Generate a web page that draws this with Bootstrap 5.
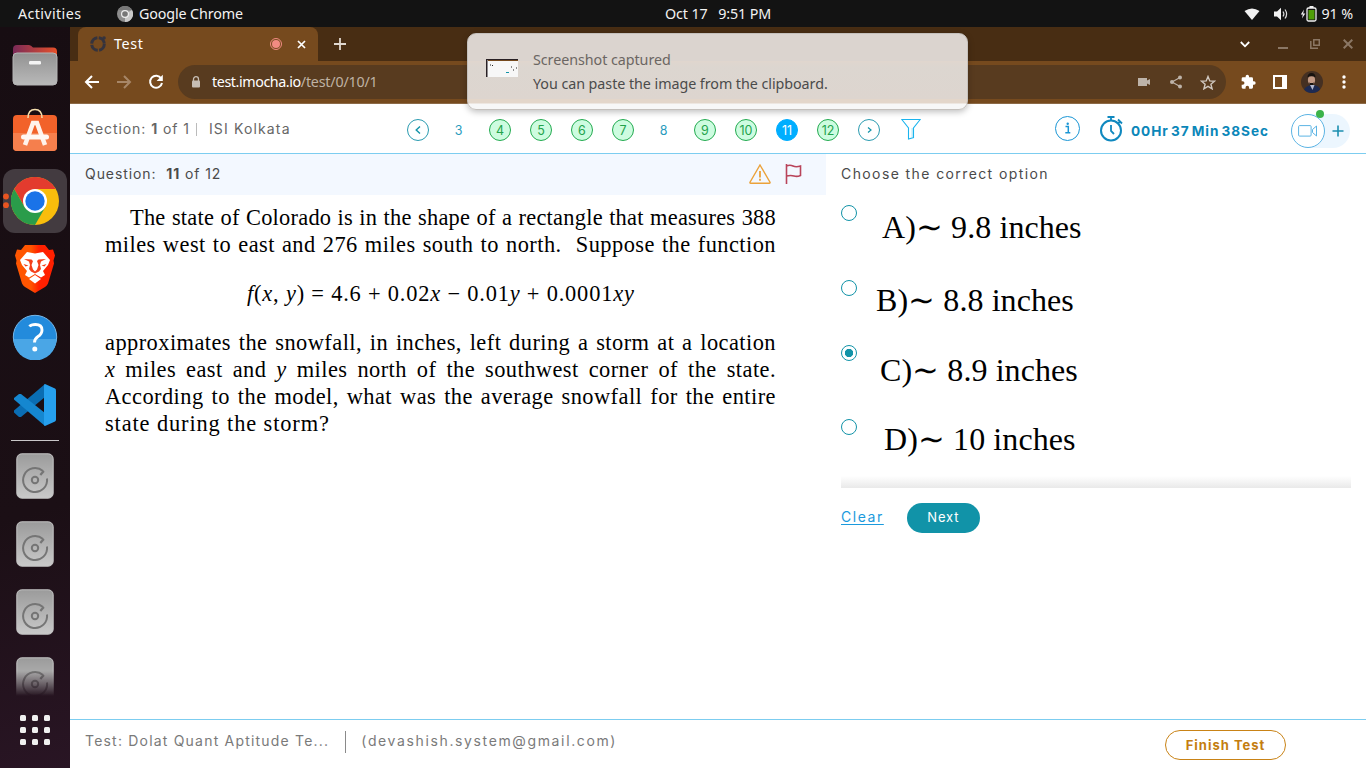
<!DOCTYPE html>
<html lang="en">
<head>
<meta charset="utf-8">
<meta name="viewport" content="width=device-width, initial-scale=1">
<title>Test</title>
<link href="https://cdn.jsdelivr.net/npm/bootstrap@5.3.0/dist/css/bootstrap.min.css" rel="stylesheet">
<style>
body{font-family:Inter,"Liberation Sans",sans-serif;color:#4a4a4a;background:#fff;font-size:14px;line-height:20px}
.desktop{width:1366px;height:768px}
.sys{font-family:"Noto Sans","Open Sans",sans-serif}
svg{display:block;flex:none}
.t{white-space:pre;display:inline-block}
.topbar{height:27px;background:#131313;color:#f2f2f2;font-size:14.3px;line-height:27px;letter-spacing:-.13px}
.topbar .left-side{width:665px;padding-left:18px}
.topbar .menu-item{letter-spacing:.38px;width:63px}
.dock{width:70px;padding-top:4px;background:linear-gradient(165deg,#170d12 0%,#1b0f15 65%,#291524 100%)}
.slot{height:68px;flex:none}
.slot-last{height:50px;flex:none;-webkit-mask-image:linear-gradient(#000 50%,transparent 100%);mask-image:linear-gradient(#000 50%,transparent 100%)}
.active-app{width:64px;height:64px;border-radius:12px;background:#433b40}
.tabstrip{height:34px;background:#482d13;padding-left:8px}
.tab-open{width:240px;height:34px;background:#764a1e;border-radius:8px 8px 0 0;color:#fff;font-size:14.3px;padding-left:12px}
.tab-open .t{letter-spacing:.6px}
.toolbar{height:42px;background:#764a1e;padding-left:14px}
.omni{height:34px;width:1048px;border-radius:17px;background:#583b1f;color:#fff;font-size:14.3px;margin-left:14px;padding-left:13px;padding-right:10px;letter-spacing:-.42px}
.omni .path{color:#bfb2a3;letter-spacing:-.2px}
.seam{height:1px;background:#8c6a47}
.avatar{width:22px;height:22px;border-radius:50%;overflow:hidden}
.test-head{height:50px;border-bottom:1px solid #7ccdf0;padding-left:15px}
.section-info{width:322px;color:#666;padding-top:1px;letter-spacing:.93px}
.section-info .client{letter-spacing:1.15px}
.pager{gap:19px}
.pg{width:22px;height:22px;border-radius:50%;font-size:12.5px;line-height:21px;text-align:center;border:1px solid transparent;color:#2a9bbd;flex:none}
.pg.plain{text-indent:-1px}
.pg.done{background:#cdfce0;border-color:#23ab50;color:#23a34c}
.pg.now{background:#00aeff;border-color:#00aeff;color:#fff}
.pg.arrow{border-color:#2a9bb0;display:flex;align-items:center;justify-content:center}
.timer{color:#0b87b9;font-weight:700;font-size:13.6px;letter-spacing:.95px;word-spacing:-2px;width:160px;padding-top:4px}
.cam-pill{width:59px;height:34px;border-radius:17px;background:linear-gradient(90deg,transparent 17px,#ecf6fe 17px)}
.cam-ring{width:34px;height:34px;border:1px solid #5cb4e4;border-radius:50%;background:#fff}
.live-dot{width:8px;height:8px;border-radius:50%;background:#3cb34a;left:25px;top:-4px}
.q-pane{width:756px}
.q-head{height:41px;background:#f3f8ff;padding:0 24px 2px 15px;letter-spacing:.92px}
.q-body{font-family:"Liberation Serif",serif;color:#000;font-size:22.4px;line-height:27px;width:671px;margin:9px 0 0 35px;letter-spacing:.45px}
.ln{display:block;white-space:nowrap;text-align-last:justify;height:27px}
.ln.first{padding-left:25px;letter-spacing:.25px}
.ln.end{text-align-last:left;letter-spacing:.88px}
.formula{margin:22px 0 22px 142px;height:27px;letter-spacing:.81px}
.a-pane{width:540px;padding-left:15px}
.a-head{height:41px;padding-bottom:2px;letter-spacing:1.4px}
.answers{height:293px;width:510px;padding-top:10px;background:linear-gradient(transparent 281px,#e9e9e9 293px)}
.opt{font-family:"Liberation Serif",serif;font-size:32px;line-height:36px;color:#000;letter-spacing:.08px}
.dotbox{width:16px;height:16px;border:1px solid #1293a8;border-radius:50%;flex:none}
.dotbox.on{background:radial-gradient(circle,#1293a8 3.8px,#fff 4.5px)}
.opt-a{height:75px}.opt-b{height:65px}.opt-c{height:74px}.opt-d{height:60px}
.opt-a .t{margin:4px 0 0 25px}.opt-b .t{margin:2px 0 0 19px}.opt-c .t{margin:7px 0 0 23px}.opt-d .t{margin:2px 0 0 27px}
.actions{padding-top:15px;gap:23px}
.clear-link{color:#1b9add;text-decoration:underline;text-underline-offset:2px;letter-spacing:1.55px;margin-top:-2px}
.btn-next{width:73px;height:30px;background:#1193a8;color:#fff;border-radius:15px;font-size:13px;letter-spacing:.8px}
.btn-next:hover{background:#0e8093;color:#fff}
.test-foot{height:49px;border-top:1px solid #7ccdf0;padding:0 80px 0 15px;color:#7a7a7a;letter-spacing:1.2px}
.test-foot .t{margin-bottom:7px}
.foot-bar{margin-bottom:5px}
.test-foot .mail{letter-spacing:1.63px}
.btn-finish{width:121px;height:30px;border:1px solid #c98316;border-radius:15px;color:#c47d10;font-weight:700;font-size:13px;letter-spacing:1px;margin-top:2px;padding:2px 0 0}
.foot-bar{width:1px;height:22px;background:#8a8a8a;margin-left:16px;margin-right:15px}
.toast-note{left:467px;top:33px;width:501px;height:77px;border-radius:9px;border:1px solid #c4c0bc;background:linear-gradient(#dbd4cf 27px,#e0d6ce 27px,#dcd6d0 33px,#ddd5cf 65px,#e3d6ca 65px,#e3d6ca 69px,#f7f7f7 70px);box-shadow:0 2px 6px rgba(0,0,0,.25);color:#4b4b4b;font-size:14.3px;line-height:24px;padding-left:18px;letter-spacing:-.05px}
</style>
</head>
<body>
<svg width="0" height="0" class="position-absolute">
  <defs>
    <linearGradient id="gDisk" x1="0" y1="0" x2="0" y2="1"><stop offset="0" stop-color="#9b9b9b"/><stop offset="1" stop-color="#c9c9c9"/></linearGradient>
    <symbol id="disk" viewBox="0 0 38 46"><rect x=".8" y=".8" width="36.4" height="44.4" rx="5" fill="url(#gDisk)" stroke="#c4c4c4"/><path d="M27 18A12 12 0 1 0 31 25.500" fill="none" stroke="#757575" stroke-width="2"/><path d="M27.800 18l-3.500 4" stroke="#757575" stroke-width="2.200"/><circle cx="19" cy="27" r="3.200" fill="none" stroke="#757575" stroke-width="2"/></symbol>
  </defs>
</svg>
<div class="desktop d-flex flex-column position-relative overflow-hidden">
  <header class="topbar sys d-flex">
    <div class="left-side d-flex align-items-center">
      <span class="t menu-item">Activities</span>
      <svg width="16" height="16" viewBox="0 0 16 16" style="margin:0 6px 0 36px"><circle cx="8" cy="8" r="8" fill="#8d8d8d"/><path d="M8 8L15 4A8 8 0 0 1 8 16z" fill="#c9c9c9"/><path d="M1 4A8 8 0 0 1 15 4H8z" fill="#777"/><circle cx="8" cy="8" r="4" fill="#eee"/><circle cx="8" cy="8" r="2.800" fill="#777"/></svg>
      <span class="t">Google Chrome</span>
    </div>
    <span class="t">Oct 17   9:51 PM</span>
    <div class="d-flex align-items-center ms-auto" style="padding-right:13px">
      <svg width="16" height="12" viewBox="0 0 16 12"><path d="M.5 3Q8-2 15.500 3L8 12z" fill="#f2f2f2"/></svg>
      <svg width="16" height="14" viewBox="0 0 16 14" style="margin-left:13px"><path d="M1 4.500h3L8 .8v12.400L4 9.500H1z" fill="#f2f2f2"/><path d="M10 4.500q1.800 2.500 0 5M12 2.500q3.200 4.500 0 9" fill="none" stroke="#ddd" stroke-width="1.200"/></svg>
      <svg width="17" height="16" viewBox="0 0 17 16" style="margin:0 5px 0 11px"><path d="M4 3.500L.8 8.500h2L2 12.500l3.300-5H3.200z" fill="#f2f2f2"/><rect x="7" y="2" width="9" height="13" rx="1.500" fill="#131313" stroke="#f2f2f2" stroke-width="1.300"/><rect x="9.500" y="0" width="4" height="2" fill="#f2f2f2"/><rect x="8.500" y="4" width="6" height="9.500" fill="#4f9e07"/></svg>
      <span class="t">91 %</span>
    </div>
  </header>

  <div class="d-flex flex-grow-1">
    <nav class="dock d-flex flex-column align-items-center position-relative">
      <div class="slot d-flex align-items-center">
        <svg width="46" height="42" viewBox="0 0 46 42"><defs><linearGradient id="gf" x2="1"><stop offset="0" stop-color="#7a2a58"/><stop offset="1" stop-color="#e6502a"/></linearGradient><linearGradient id="gg" x2="0" y2="1"><stop offset="0" stop-color="#929292"/><stop offset="1" stop-color="#b9b9b9"/></linearGradient></defs><path d="M1 18V5q0-4 4-4h12q2 0 4 2.500h20q4 0 4 4V18z" fill="url(#gf)"/><rect x="1" y="9" width="44" height="32" rx="4" fill="url(#gg)" stroke="#b5b5b5"/><rect x="17" y="17" width="12" height="3.500" rx="1.200" fill="#f4f4f4"/></svg>
      </div>
      <div class="slot d-flex align-items-center">
        <svg width="46" height="44" viewBox="0 0 46 44" style="margin-top:-6px"><rect x="1" y="7" width="44" height="36" rx="4" fill="#f2622a"/><path d="M1 25h44v14q0 4-4 4H5q-4 0-4-4z" fill="#f57f4d"/><path d="M16 10q0-8.500 7-8.500T30 10" fill="none" stroke="#f6dfae" stroke-width="1.500"/><path d="M13 37l8-22h4l8 22" fill="none" stroke="#fff3ec" stroke-width="4.500"/><rect x="9" y="26.500" width="28" height="5" rx="2.500" fill="#fff8f4"/></svg>
      </div>
      <div class="slot d-flex align-items-center">
        <div class="active-app d-flex align-items-center justify-content-center">
          <svg width="48" height="48" viewBox="0 0 48 48"><circle cx="24" cy="24" r="24" fill="#f9bd0c"/><path d="M3.200 12A24 24 0 0 1 44.800 12H24L13.600 30z" fill="#e33b2e"/><path d="M3.200 12A24 24 0 0 0 24 48L34.400 30H24L13.600 30z" fill="#2a9c4a"/><circle cx="24" cy="24" r="12" fill="#fff"/><circle cx="24" cy="24" r="9.700" fill="#1a73e8"/></svg>
        </div>
      </div>
      <svg class="position-absolute" width="6" height="16" viewBox="0 0 6 16" style="left:3px;top:166px"><circle cx="3" cy="3.500" r="2.900" fill="#e95420"/><circle cx="3" cy="12.200" r="2.900" fill="#e95420"/></svg>
      <div class="slot d-flex align-items-center">
        <svg width="42" height="48" viewBox="0 0 42 48"><defs><linearGradient id="gb" x2="1"><stop offset=".4" stop-color="#ff5500"/><stop offset=".6" stop-color="#ff2000"/></linearGradient></defs><path d="M11 0h20l4 5 4-.5 2 6-1.500 5 .5 3-6 20q-1 2-3 3.500L21 48 11 42q-2-1.500-3-3.500L2 18.500l.5-3L1 10.500l2-6L7 5z" fill="url(#gb)"/><path d="M13 7l8 1.500L29 7l7 8-2 5-5 6 2 4-4 2.500-6-3.500-6 3.500-4-2.500 2-4-5-6-2-5z" fill="#fff"/><path d="M10 14l7.500.5 1.500 1.500-1.500 4 1.500 4.500 2 2 2-2 1.500-4.500-1.500-4 1.500-1.500L32 14l-5 2.500-1 3.500 1 4-2 2.500-4 2-4-2-2-2.500 1-4-1-3.500z" fill="#f4401a"/><path d="M9.500 19l5 1.500-3 1zM32.500 19l-5 1.500 3 1z" fill="#f4401a"/><path d="M15 34l6-4 6 4-6 4.500z" fill="#fff"/></svg>
      </div>
      <div class="slot d-flex align-items-center">
        <svg width="46" height="46" viewBox="0 0 46 46"><circle cx="23" cy="23" r="21.700" fill="#238bdc" stroke="#77b8ea"/><path d="M1.500 25a21.500 21.500 0 0 0 43 0z" fill="#4aa6e6"/><path d="M17.500 12.500q1.500-2 6-2 6.500 0 6.500 5.500 0 4-4 6.500-3.500 2.300-3.500 6" fill="none" stroke="#fff" stroke-width="2.900"/><circle cx="22.800" cy="35" r="2.500" fill="#fff"/></svg>
      </div>
      <div class="slot d-flex align-items-center">
        <svg width="42" height="42" viewBox="0 0 42 42"><path d="M31 0v13L7 33l-2 0L0 28.500v-2z" fill="#0a6db3"/><path d="M0 14L5 10h2L31 29v13L0 15.500z" fill="#1587d0"/><path d="M31 0l10 4.500q1 .5 1 2v29q0 1.500-1 2L31 42q-1 0-1-2V2q0-2 1-2z" fill="#26a0ee"/></svg>
      </div>
      <div style="width:48px;height:1px;margin:1px 0;background:#c9c6c8;flex:none"></div>
      <div class="slot d-flex align-items-center"><svg width="38" height="46"><use href="#disk"/></svg></div>
      <div class="slot d-flex align-items-center"><svg width="38" height="46"><use href="#disk"/></svg></div>
      <div class="slot d-flex align-items-center"><svg width="38" height="46"><use href="#disk"/></svg></div>
      <div class="slot-last overflow-hidden"><svg width="38" height="46" style="margin-top:11px"><use href="#disk"/></svg></div>
      <svg width="30" height="30" viewBox="0 0 30 30" fill="#f0f0f0" style="margin-top:19px"><rect width="6" height="6" rx="1.500"/><rect x="12" width="6" height="6" rx="1.500"/><rect x="24" width="6" height="6" rx="1.500"/><rect y="12" width="6" height="6" rx="1.500"/><rect x="12" y="12" width="6" height="6" rx="1.500"/><rect x="24" y="12" width="6" height="6" rx="1.500"/><rect y="24" width="6" height="6" rx="1.500"/><rect x="12" y="24" width="6" height="6" rx="1.500"/><rect x="24" y="24" width="6" height="6" rx="1.500"/></svg>
    </nav>

    <section class="d-flex flex-column flex-grow-1">
      <div class="tabstrip sys d-flex align-items-center">
        <div class="tab-open d-flex align-items-center">
          <svg width="16" height="16" viewBox="0 0 16 16"><circle cx="8" cy="8" r="6.300" fill="none" stroke="#35333d" stroke-width="3" stroke-dasharray="8.500 1.400"/><circle cx="14" cy="2" r="1.800" fill="#35333d"/></svg>
          <span class="t" style="margin-left:8px">Test</span>
          <svg width="14" height="14" viewBox="0 0 14 14" style="margin-left:auto;margin-right:14px"><circle cx="7" cy="7" r="5.500" fill="none" stroke="#f28b82"/><circle cx="7" cy="7" r="4" fill="#f28b82"/></svg>
          <svg width="9" height="9" viewBox="0 0 9 9" style="margin-right:12px"><path d="M1 1l7 7M8 1l-7 7" stroke="#fff" stroke-width="1.700"/></svg>
        </div>
        <svg width="12" height="12" viewBox="0 0 12 12" style="margin-left:16px"><path d="M6 0v12M0 6h12" stroke="#e0d8d0" stroke-width="1.800"/></svg>
        <div class="d-flex align-items-center ms-auto" style="padding-right:13px">
          <svg width="10" height="7" viewBox="0 0 10 7" style="margin-right:28px"><path d="M.8 1L5 5.300 9.200 1" fill="none" stroke="#fff" stroke-width="1.800"/></svg>
          <svg width="10" height="10" viewBox="0 0 10 10" style="margin-right:22px"><path d="M0 9h10" stroke="#8b7765" stroke-width="2"/></svg>
          <svg width="10" height="10" viewBox="0 0 10 10" style="margin-right:23px"><path d="M3.800.8h5.500v5.500H3.800zM.8 2v7.300H8" fill="none" stroke="#8b7765" stroke-width="1.500"/></svg>
          <svg width="10" height="10" viewBox="0 0 10 10"><path d="M.7.700l8.600 8.600M9.300.7L.7 9.300" stroke="#8b7765" stroke-width="2"/></svg>
        </div>
      </div>
      <div class="toolbar sys d-flex align-items-center">
        <svg width="16" height="14" viewBox="0 0 16 14"><path d="M15 7H2M8 1L2 7l6 6" fill="none" stroke="#fff" stroke-width="2"/></svg>
        <svg width="16" height="14" viewBox="0 0 16 14" style="margin-left:16px"><path d="M1 7h13M8 1l6 6-6 6" fill="none" stroke="#a78667" stroke-width="2"/></svg>
        <svg width="16" height="16" viewBox="0 0 16 16" style="margin-left:16px"><path d="M13.200 4.500A6 6 0 1 0 14 9" fill="none" stroke="#fff" stroke-width="2"/><path d="M14.800.8V7H8.600z" fill="#fff"/></svg>
        <div class="omni d-flex align-items-center">
          <svg width="10" height="12" viewBox="0 0 10 12"><path d="M2.500 5V3.200a2.500 2.500 0 0 1 5 0V5" fill="none" stroke="#c6bdb4" stroke-width="1.300"/><rect x="1" y="4.500" width="8" height="7" rx="1" fill="#c6bdb4"/></svg>
          <span style="margin-left:11px"><span class="t">test.imocha.io</span><span class="path t">/test/0/10/1</span></span>
          <svg width="12" height="8" viewBox="0 0 12 8" style="margin-left:auto;margin-right:20px"><path d="M0 0h9v2.500L12 1v6L9 5.500V8H0z" fill="#bdb3a9"/></svg>
          <svg width="12" height="14" viewBox="0 0 12 14" style="margin-right:18px" fill="#bdb3a9"><path d="M10 2.500L2 7l8 4.500" fill="none" stroke="#bdb3a9" stroke-width="1.200"/><circle cx="10" cy="2.500" r="2"/><circle cx="2" cy="7" r="2"/><circle cx="10" cy="11.500" r="2"/></svg>
          <svg width="16" height="15" viewBox="0 0 16 15"><path d="M8 1.500l1.800 4.400 4.700.3-3.600 3 1.200 4.600L8 11.300l-4.100 2.500 1.200-4.600-3.600-3 4.700-.3z" fill="none" stroke="#d0c8c0" stroke-width="1.400"/></svg>
        </div>
        <svg width="16" height="16" viewBox="0 0 24 24" style="margin-left:14px"><path d="M21 11h-1.500V7a2 2 0 0 0-2-2h-4V3.500a2.500 2.500 0 0 0-5 0V5h-4a2 2 0 0 0-2 2v3.800H4a2.700 2.700 0 0 1 0 5.400H2.500V20a2 2 0 0 0 2 2h3.800v-1.500a2.700 2.700 0 0 1 5.400 0V22h3.800a2 2 0 0 0 2-2v-4H21a2.500 2.500 0 0 0 0-5z" fill="#fff"/></svg>
        <svg width="14" height="14" viewBox="0 0 14 14" style="margin-left:17px"><path d="M0 0h14v14H0zM2 2v10h7V2z" fill="#fff" fill-rule="evenodd"/></svg>
        <div class="avatar" style="margin-left:14px"><svg width="22" height="22" viewBox="0 0 22 22"><path fill="#453022" d="M0 0h22v22H0z"/><path d="M2 22q1-7 8-8 8-1 10 6v2z" fill="#1d2a52"/><ellipse cx="10.500" cy="9" rx="3.600" ry="5" fill="#c39a85"/><path d="M6.500 6.500q0-4.500 4-4.500t4 4.500q-4-2.500-8 0zM8 11.500q2.500 1 5 0l-1 2.500H9z" fill="#17120f"/><path d="M9 14l2.500 5 2-5z" fill="#b5b9ce"/></svg></div>
        <svg width="4" height="14" viewBox="0 0 4 14" fill="#fff" style="margin-left:19px"><circle cx="2" cy="2" r="1.700"/><circle cx="2" cy="7" r="1.700"/><circle cx="2" cy="12" r="1.700"/></svg>
      </div>
      <div class="seam"></div>

      <div class="test-head d-flex align-items-center">
        <div class="section-info d-flex"><span class="t">Section: <b>1</b> of 1</span><span style="width:1px;height:13px;margin:4px 12px 0 6px;background:#bbb"></span><span class="t client">ISI Kolkata</span></div>
        <div class="pager d-flex align-items-center" style="padding-top:3px">
          <span class="pg arrow"><svg width="6" height="8" viewBox="0 0 6 8"><path d="M5 .5L1.200 4 5 7.500" fill="none" stroke="#1293a8" stroke-width="1.400"/></svg></span>
          <span class="pg plain">3</span><span class="pg done">4</span><span class="pg done">5</span><span class="pg done">6</span><span class="pg done">7</span><span class="pg plain">8</span><span class="pg done">9</span><span class="pg done">10</span><span class="pg now">11</span><span class="pg done">12</span>
          <span class="pg arrow"><svg width="5" height="6" viewBox="0 0 5 6"><path d="M1 .5L4 3 1 5.500" fill="none" stroke="#1293a8" stroke-width="1.200"/></svg></span>
        </div>
        <svg width="20" height="21" viewBox="0 0 20 21" style="margin-left:21px;margin-top:1px"><path d="M.8.5h18.400L12.500 9v9.500L7.500 20V9z" fill="#fff" stroke="#1bb4ee" stroke-width="1.100"/><path d="M10.500 9h1.500v9l-1.500.5z" fill="#bdeaf8"/></svg>
        <div class="d-flex align-items-center ms-auto" style="padding-right:16px">
          <svg width="26" height="26" viewBox="0 0 26 26" style="margin-right:19px"><circle cx="12.500" cy="12.500" r="12" fill="none" stroke="#1b96d5"/><path d="M10.500 10.500h2.800v6M10.300 16.800h5" stroke="#1b96d5" stroke-width="1.500" fill="none"/><circle cx="12.700" cy="7.800" r="1.200" fill="#1b96d5"/></svg>
          <svg width="24" height="26" viewBox="0 0 24 26" fill="none" stroke="#0f88bf" stroke-width="2" style="margin-right:7px;margin-top:1px"><circle cx="11" cy="14.500" r="10"/><path d="M7.500 1h7M11 1v4M11 9v6l3 3" stroke-width="1.800"/><path d="M18 3.500l4 4M20 5.500l-2.500 2.500" stroke-width="1.800"/></svg>
          <span class="timer"><span class="t">00Hr 37 Min 38Sec</span></span>
          <div class="cam-pill position-relative d-flex align-items-center" style="margin-top:4px">
            <div class="cam-ring d-flex align-items-center justify-content-center"><svg width="20" height="12" viewBox="0 0 20 12" fill="none" stroke="#5cb4e4"><rect x=".6" y=".6" width="12.500" height="10.500" rx="1"/><path d="M14.500 4.500L18.500 1v10l-4-3.500z"/></svg></div>
            <span class="live-dot position-absolute"></span>
            <svg width="12" height="12" viewBox="0 0 12 12" style="margin-left:7px"><path d="M6 .5v11M.5 6h11" stroke="#1c8fb0" stroke-width="1.600"/></svg>
          </div>
        </div>
      </div>

      <main class="d-flex flex-grow-1">
        <section class="q-pane">
          <div class="q-head d-flex align-items-center">
            <span class="t">Question:  <b>11</b> of 12</span>
            <svg width="22" height="20" viewBox="0 0 22 20" fill="none" stroke="#eba23a" stroke-width="1.400" class="ms-auto"><path d="M11 1L21 18.200q.3 1-.6 1H1.600q-1 0-.6-1z"/><path d="M11 7v6.500M11 14.800v2" stroke-width="1.800"/></svg>
            <svg width="17" height="20" viewBox="0 0 17 20" fill="none" stroke="#b9445a" stroke-width="1.600" style="margin-left:14px"><path d="M1.500 0v20M1.500 2Q5 .5 8 2t7.500 0v9.500Q12 13 9 12t-7.500 0"/></svg>
          </div>
          <div class="q-body">
            <span class="ln first">The state of Colorado is in the shape of a rectangle that measures 388</span>
            <span class="ln">miles west to east and 276 miles south to north. &nbsp;Suppose the function</span>
            <div class="formula"><span class="t"><i>f</i>(<i>x</i>, <i>y</i>) = 4.6 + 0.02<i>x</i> − 0.01<i>y</i> + 0.0001<i>xy</i></span></div>
            <span class="ln">approximates the snowfall, in inches, left during a storm at a location</span>
            <span class="ln"><i>x</i> miles east and <i>y</i> miles north of the southwest corner of the state.</span>
            <span class="ln">According to the model, what was the average snowfall for the entire</span>
            <span class="ln end">state during the storm?</span>
          </div>
        </section>
        <section class="a-pane">
          <div class="a-head d-flex align-items-center"><span class="t">Choose the correct option</span></div>
          <div class="answers">
            <div class="opt opt-a d-flex align-items-start"><span class="dotbox"></span><span class="t">A)∼ 9.8 inches</span></div>
            <div class="opt opt-b d-flex align-items-start"><span class="dotbox"></span><span class="t">B)∼ 8.8 inches</span></div>
            <div class="opt opt-c d-flex align-items-start"><span class="dotbox on"></span><span class="t">C)∼ 8.9 inches</span></div>
            <div class="opt opt-d d-flex align-items-start"><span class="dotbox"></span><span class="t">D)∼ 10 inches</span></div>
          </div>
          <div class="actions d-flex align-items-center">
            <a href="#" class="clear-link">Clear</a>
            <button type="button" class="btn btn-next p-0 border-0">Next</button>
          </div>
        </section>
      </main>

      <footer class="test-foot d-flex align-items-center">
        <span class="t">Test: Dolat Quant Aptitude Te...</span>
        <span class="foot-bar"></span>
        <span class="t mail">(devashish.system@gmail.com)</span>
        <button type="button" class="btn btn-finish ms-auto">Finish Test</button>
      </footer>
    </section>
  </div>

  <aside class="toast-note sys position-absolute d-flex align-items-center">
    <svg width="32" height="18" viewBox="0 0 32 18" style="margin-top:-7px"><path fill="#f7f7f7" d="M0 0h32v18H0z"/><path fill="#282024" d="M0 0h32v1H0zM0 0h1.500v18H0z"/><path fill="#764a1e" d="M2 1h30v1H2z"/><path d="M4 6h1M6 6.500h1M25 8h1M27 11h1M30 9h1" stroke="#222"/><path d="M20 13.500h3" stroke="#1193a8"/></svg>
    <div style="margin-left:15px"><div style="color:#6b6663"><span class="t">Screenshot captured</span></div><div><span class="t">You can paste the image from the clipboard.</span></div></div>
  </aside>
</div>
<script src="https://cdn.jsdelivr.net/npm/bootstrap@5.3.0/dist/js/bootstrap.bundle.min.js"></script>
</body>
</html>
